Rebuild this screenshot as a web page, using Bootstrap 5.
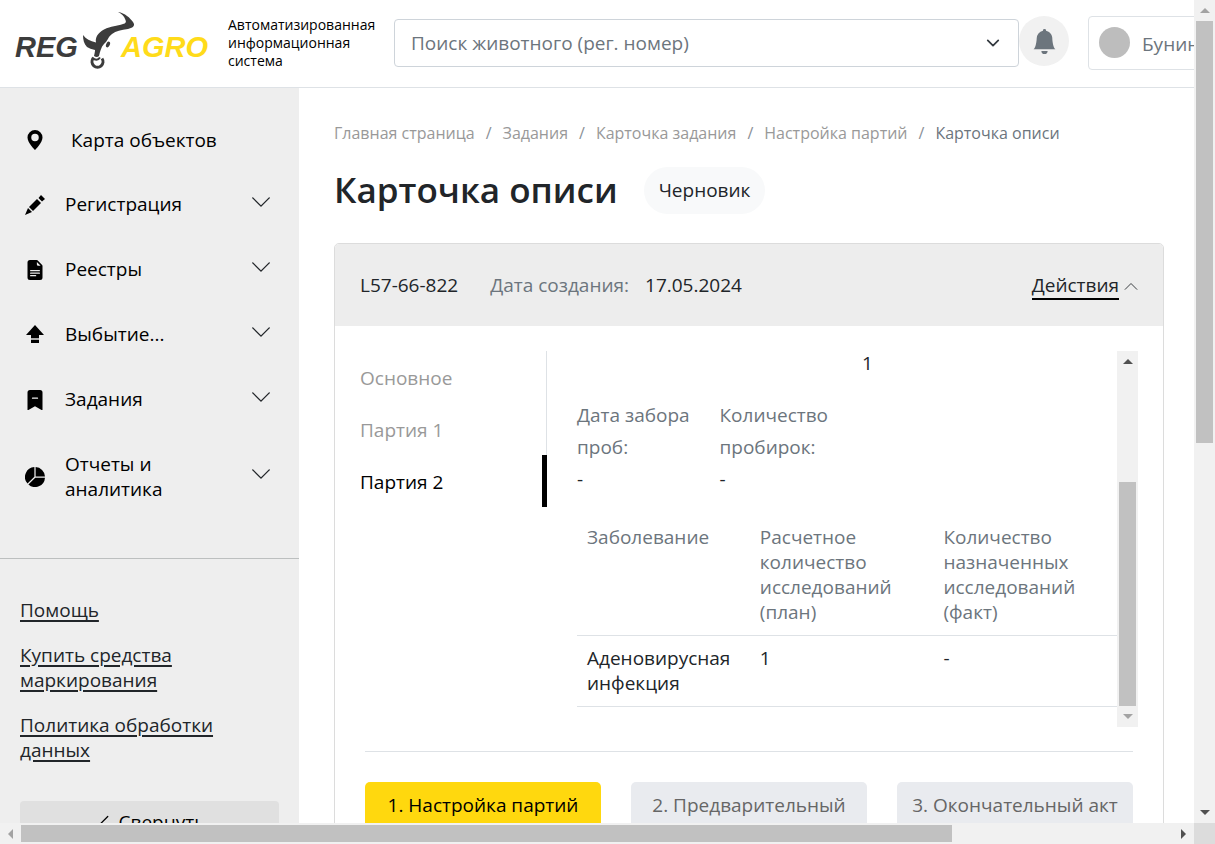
<!DOCTYPE html>
<html lang="ru">
<head>
<meta charset="utf-8">
<meta name="viewport" content="width=device-width, initial-scale=1">
<title>Карточка описи — RegAgro</title>
<link href="https://cdn.jsdelivr.net/npm/bootstrap@5.3.0/dist/css/bootstrap.min.css" rel="stylesheet">
<style>
body{font-family:"Open Sans","Noto Sans",sans-serif;font-size:19px;line-height:25px;color:#212529}
.shell{display:grid;grid-template:minmax(0,1fr) 21px / minmax(0,1fr) 21px;height:100vh}
.view{overflow:hidden}
.sb{background:#f1f1f1;display:flex;align-items:center}
.sb-v{flex-direction:column}
.sb .end{width:21px;height:21px;flex:none;display:flex;align-items:center;justify-content:center;fill:#505050}
.sb .end.off{fill:#a3a3a3}
.sb .thumb{background:#c1c1c1;width:17px;height:17px}
.corner{background:#dcdcdc}
.topbar{border-bottom:1px solid #dee2e6;height:88px;width:1477px;padding:0 0 2px 14px}
.logo{width:200px;height:64px;flex:none}
.logo svg{display:block}
.slogan{width:166px;margin-left:14px;font-size:14px;line-height:18px;color:#000;flex:none}
.search{width:625px;height:48px;font-size:19px;padding:2px 16px 0;border-color:#ced4da;border-radius:4px;color:#6c757d;background-position:right 16px center;background-size:18px 14px}
.bell{width:50px;height:50px;border-radius:50%;background:#f1f1f1;border:0;margin:-4px 19px 0 0;color:#6c757d}
.user{height:54px;border:1px solid #dee2e6;border-radius:4px;background:#fff;color:#6c757d;padding:0 16px 0 10px}
.avatar{width:31px;height:31px;border-radius:50%;background:#bdbdbd}
.side{width:299px;flex:none;background:#eee}
.menu{padding:20px 27px 36px 25px;border-bottom:1px solid #bcbfbf}
.menu button,.menu a{display:flex;align-items:center;width:100%;padding:20px 0;border:0;background:none;color:#000;text-align:left;text-decoration:none}
.menu a{line-height:24px}
.menu svg{flex:none}
.menu .chev{margin:-3px 0 3px;fill:#212529}
.menu .label{margin-left:20px;flex:1}
.menu .wide{margin-left:26px}
.links{padding:39px 20px 0}
.links a{color:#212529;text-underline-offset:3px;text-decoration-thickness:2px}
.collapse-btn{background:#e0e0e0;border:0;border-radius:4px;padding:9px;color:#000;margin-top:38px}
.content{padding:33px 30px 0 35px;min-width:0}
.crumbs{font-size:16px;--bs-breadcrumb-item-padding-x:11px;--bs-breadcrumb-divider-color:#8b9197}
.crumbs li::before{color:#8b9197!important}
.crumbs a{color:#999;text-decoration:none}
.crumbs .active{color:#6c757d}
.title-row{padding:20px 0 29px}
h1{font-size:35px;font-weight:600;line-height:48px}
.status{background:#f8f9fa;padding:11px 15px;margin-left:26px}
.sheet{border:1px solid #dcdcdc;border-radius:5px}
.sheet-head{background:#ededed;padding:29px 25px 28px;border-radius:4px 4px 0 0}
.sheet-body{padding:25px}
.gray{color:#6c757d}
.actions{border:0;background:none;padding:0;color:#212529}
.actions .txt{border-bottom:2px solid #000}
.tabs{width:187px;flex:none;margin-right:30px}
.tabs a{display:block;padding:15px 0 12px;color:#999;text-decoration:none;border-right:1px solid #dee2e6}
.tabs a.active{color:#000;border-right:5px solid #000}
.facts{--bs-gutter-x:30px;line-height:32px}
.facts .gray{white-space:nowrap}
.facts-top{line-height:25px;margin-bottom:23px}
.data{margin:20px 0;color:#212529;table-layout:fixed}
.data th,.data td{padding:10px;border-bottom:1px solid #dee2e6;font-weight:400;vertical-align:top;background:none}
.data th{color:#6c757d}
.steps{margin:24px 5px 0;padding-top:30px;gap:30px;border-top:1px solid #dee2e6}
.steps button{flex:1 1 0;border:0;border-radius:5px;padding:11px 5px;white-space:nowrap;background:#e9ebef;color:#666}
.steps .now{background:#ffd80e;color:#000}
</style>
</head>
<body>
<svg class="d-none" xmlns="http://www.w3.org/2000/svg">
<symbol id="down" viewBox="0 0 16 16"><path fill-rule="evenodd" d="M1.646 4.646a.5.5 0 0 1 .708 0L8 10.293l5.646-5.647a.5.5 0 0 1 .708.708l-6 6a.5.5 0 0 1-.708 0l-6-6a.5.5 0 0 1 0-.708z"/></symbol>
</svg>
<div class="shell">
<div class="view">
<header class="topbar d-flex align-items-center">
<a href="#" class="logo" aria-label="RegAgro"><svg width="200" height="64" viewBox="14 11 200 64">
<g font-family="Liberation Sans" font-weight="700" font-style="italic" font-size="29"><text x="15" y="57" fill="#3c3c3c">REG</text><text x="121" y="57" fill="#ffdb1a">AGRO</text></g>
<g fill="#3c3c3c"><path d="M118 12C125 13 130 18 133 22C136 26 132 28 128 29C121 30 116 31 112 34C107 38 108 41 104 44C101 47 100 52 99 56Q97 58 94 56C95 52 95 51 95 50Q90 49 87 47C84 44 83 40 83 35C86 39 90 41 96 42.500C95 37 98 33 104 29.500C111 26 117 26 123 24Q127 23 125.500 20C124 16 122 14 118 12Z"/><ellipse cx="108" cy="44.500" rx="1.800" ry="3" transform="rotate(25 108 44.500)"/></g>
<path d="M93 58.500A5.500 5.500 0 1 0 102 58.500" fill="none" stroke="#3c3c3c" stroke-width="3"/><path d="M92 57.500Q97 62 100 57.500" fill="none" stroke="#3c3c3c" stroke-width="2"/></svg></a>
<div class="slogan">Автоматизированная информационная система</div>
<select class="search form-select flex-shrink-0" aria-label="Поиск животного"><option>Поиск животного (рег. номер)</option></select>
<button class="bell" aria-label="Уведомления"><svg width="25" height="25" viewBox="0 0 16 16" fill="currentColor"><path d="M8 16a2 2 0 0 0 2-2H6a2 2 0 0 0 2 2zm.995-14.901a1 1 0 1 0-1.99 0A5.002 5.002 0 0 0 3 6c0 1.098-.5 6-2 7h14c-1.5-1-2-5.902-2-7 0-2.42-1.72-4.44-4.005-4.901z"/></svg></button>
<button class="user d-flex align-items-center"><span class="avatar me-2"></span><span class="ms-1 pt-1">Бунин</span></button>
</header>
<div class="d-flex">
<aside class="side">
<nav class="menu">
<a href="#"><svg width="20" height="20" viewBox="0 0 16 16"><path d="M8 16s6-5.686 6-10A6 6 0 0 0 2 6c0 4.314 6 10 6 10zm0-7a3 3 0 1 1 0-6 3 3 0 0 1 0 6z"/></svg><span class="label wide">Карта объектов</span></a>
<button><svg width="20" height="20" viewBox="0 0 20 20"><path d="M0 20L3 13L7 17ZM4 12L12 4L16 8L8 16ZM13.500 3L16 0L20 4L17 6.500Z"/></svg><span class="label">Регистрация</span><svg class="chev" width="22" height="22"><use href="#down"/></svg></button>
<button><svg width="20" height="20" viewBox="0 0 16 16"><path d="M9.293 0H4a2 2 0 0 0-2 2v12a2 2 0 0 0 2 2h8a2 2 0 0 0 2-2V4.707A1 1 0 0 0 13.707 4L10 .293A1 1 0 0 0 9.293 0zM9.5 3.5v-2l3 3h-2a1 1 0 0 1-1-1zM4.500 9a.5.5 0 0 1 0-1h7a.5.5 0 0 1 0 1h-7zM4 10.500a.5.5 0 0 1 .5-.5h7a.5.5 0 0 1 0 1h-7a.5.5 0 0 1-.5-.5zm.5 2.500a.5.5 0 0 1 0-1h4a.5.5 0 0 1 0 1h-4z"/></svg><span class="label">Реестры</span><svg class="chev" width="22" height="22"><use href="#down"/></svg></button>
<button><svg width="20" height="20" viewBox="0 0 20 20"><path d="M10 0L19 10H14V13H6V10H1Z"/><path d="M6 13H14V15H6Z" fill="#aaa"/><path d="M6 15H14V18H6Z"/></svg><span class="label">Выбытие...</span><svg class="chev" width="22" height="22"><use href="#down"/></svg></button>
<button><svg width="20" height="20" viewBox="0 0 16 16"><path fill-rule="evenodd" d="M2 15.500V2a2 2 0 0 1 2-2h8a2 2 0 0 1 2 2v13.500a.5.5 0 0 1-.74.439L8 13.069l-5.260 2.870A.5.5 0 0 1 2 15.500zM6 6a.5.5 0 0 0 0 1h4a.5.5 0 0 0 0-1H6z"/></svg><span class="label">Задания</span><svg class="chev" width="22" height="22"><use href="#down"/></svg></button>
<button><svg width="20" height="20" viewBox="0 0 16 16"><path d="M15.985 8.500H8.207l-5.500 5.500a8 8 0 0 0 13.277-5.500zM2 13.292A8 8 0 0 1 7.500.015v7.778l-5.500 5.500zM8.500.015V7.500h7.485A8.001 8.001 0 0 0 8.500.015z"/></svg><span class="label">Отчеты и<br>аналитика</span><svg class="chev" width="22" height="22"><use href="#down"/></svg></button>
</nav>
<div class="links d-flex flex-column">
<a href="#">Помощь</a><a href="#" class="my-3 py-1">Купить средства маркирования</a><a href="#">Политика обработки данных</a>
<button class="collapse-btn"><svg width="20" height="20" viewBox="0 0 16 16"><path d="M11.354 1.646a.5.5 0 0 1 0 .708L5.707 8l5.647 5.646a.5.5 0 0 1-.708.708l-6-6a.5.5 0 0 1 0-.708l6-6a.5.5 0 0 1 .708 0z"/></svg> Свернуть</button>
</div>
</aside>
<main class="content">
<nav aria-label="Навигация"><ol class="crumbs breadcrumb mb-0">
<li class="breadcrumb-item"><a href="#">Главная страница</a></li><li class="breadcrumb-item"><a href="#">Задания</a></li><li class="breadcrumb-item"><a href="#">Карточка задания</a></li><li class="breadcrumb-item"><a href="#">Настройка партий</a></li><li class="breadcrumb-item active">Карточка описи</li></ol></nav>
<div class="title-row d-flex align-items-center"><h1 class="mb-0">Карточка описи</h1><span class="status rounded-pill">Черновик</span></div>
<section class="sheet">
<div class="sheet-head d-flex"><span>L57-66-822</span><span class="gray ms-4 ps-2">Дата создания:</span><span class="ms-3">17.05.2024</span>
<button class="actions ms-auto"><span class="txt">Действия</span> <svg width="14" height="14" viewBox="0 0 16 16" fill="none" stroke="currentColor"><path d="M1 11L8 4L15 11"/></svg></button></div>
<div class="sheet-body">
<div class="d-flex">
<nav class="tabs"><a href="#">Основное</a><a href="#">Партия 1</a><a href="#" class="active">Партия 2</a></nav>
<div class="flex-fill">
<div class="row facts facts-top"><div class="col-3 offset-6">1</div></div>
<div class="row facts"><div class="col-3"><div class="gray">Дата забора<br>проб:</div>-</div><div class="col-3"><div class="gray">Количество<br>пробирок:</div>-</div></div>
<table class="table data"><colgroup><col style="width:32%"><col style="width:34%"><col style="width:34%"></colgroup>
<thead><tr><th>Заболевание</th><th>Расчетное количество исследований (план)</th><th>Количество назначенных исследований (факт)</th></tr></thead>
<tbody><tr><td>Аденовирусная инфекция</td><td>1</td><td>-</td></tr></tbody></table>
</div>
<div class="sb sb-v"><span class="end"><svg width="10" height="5"><path d="M0 5L5 0L10 5Z"/></svg></span><span style="height:110px"></span><span class="thumb flex-fill"></span><span class="end off"><svg width="10" height="5"><path d="M0 0H10L5 5Z"/></svg></span></div>
</div>
<div class="steps d-flex"><button class="now">1. Настройка партий</button><button>2. Предварительный</button><button>3. Окончательный акт</button></div>
</div>
</section>
</main>
</div>
</div>
<div class="sb sb-v"><span class="end off"><svg width="10" height="5"><path d="M0 5L5 0L10 5Z"/></svg></span><span class="thumb" style="height:51.3%"></span><span class="end mt-auto"><svg width="10" height="5"><path d="M0 0H10L5 5Z"/></svg></span></div>
<div class="sb"><span class="end off"><svg width="5" height="10"><path d="M5 0L0 5L5 10Z"/></svg></span><span class="thumb" style="width:78%"></span><span class="end ms-auto"><svg width="5" height="10"><path d="M0 0L5 5L0 10Z"/></svg></span></div>
<div class="corner"></div>
</div>
<script src="https://cdn.jsdelivr.net/npm/bootstrap@5.3.0/dist/js/bootstrap.bundle.min.js"></script>
</body>
</html>
